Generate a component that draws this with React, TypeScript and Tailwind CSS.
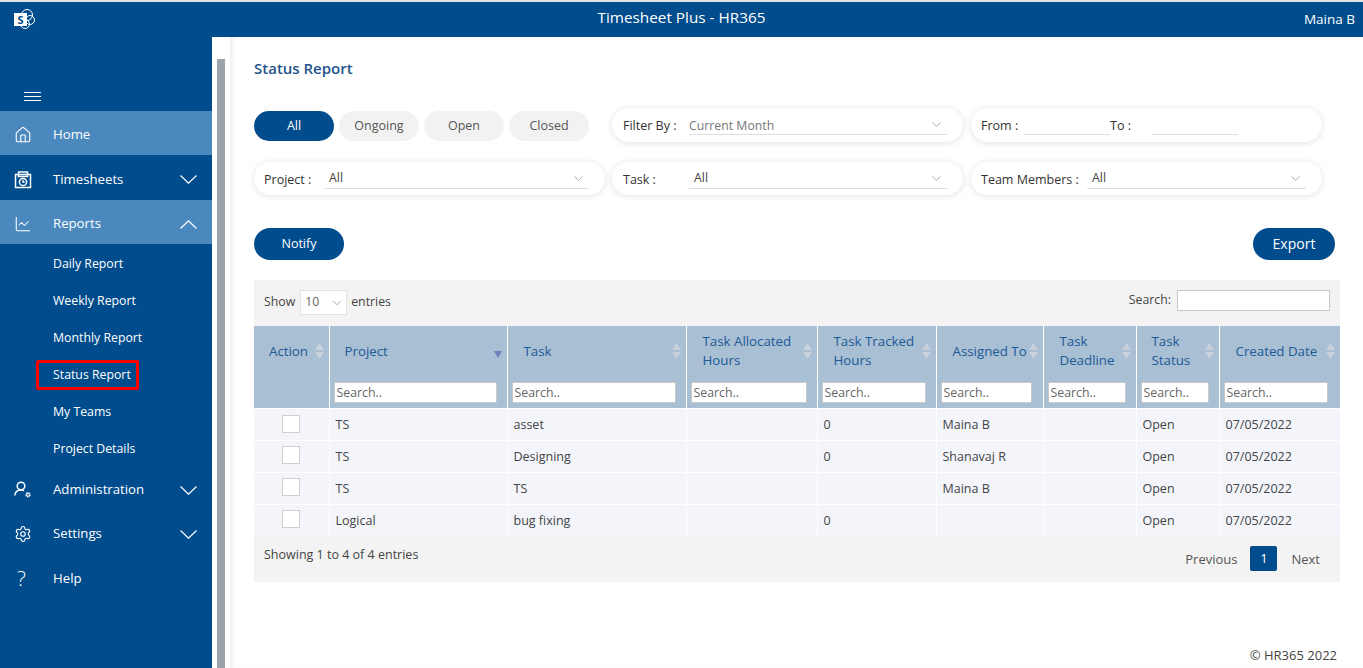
import React from 'react';
import { ChevronDown, Home, LineChart, Settings } from 'lucide-react';

const subItems = ['Daily Report', 'Weekly Report', 'Monthly Report', 'Status Report', 'My Teams', 'Project Details'];

const columns = [
  { title: ['Action'], width: 'w-[75px]', pad: 'pl-[15px]', search: false, input: '' },
  { title: ['Project'], width: 'w-[178px]', pad: 'pl-[15px]', search: true, input: 'w-[163px]', sorted: true },
  { title: ['Task'], width: 'w-[179px]', pad: 'pl-[16px]', search: true, input: 'w-[164px]' },
  { title: ['Task Allocated', 'Hours'], width: 'w-[131px]', pad: 'pl-[16px]', search: true, input: 'w-[116px]' },
  { title: ['Task Tracked', 'Hours'], width: 'w-[119px]', pad: 'pl-[16px]', search: true, input: 'w-[104px]' },
  { title: ['Assigned To'], width: 'w-[107px]', pad: 'pl-[16px]', search: true, input: 'w-[91px]' },
  { title: ['Task', 'Deadline'], width: 'w-[93px]', pad: 'pl-[16px]', search: true, input: 'w-[78px]' },
  { title: ['Task', 'Status'], width: 'w-[83px]', pad: 'pl-[15px]', search: true, input: 'w-[68px]' },
  { title: ['Created Date'], width: 'w-[121px]', pad: 'pl-[16px]', search: true, input: 'w-[104px]' },
];

const rows = [
  ['TS', 'asset', '', '0', 'Maina B', '', 'Open', '07/05/2022'],
  ['TS', 'Designing', '', '0', 'Shanavaj R', '', 'Open', '07/05/2022'],
  ['TS', 'TS', '', '', 'Maina B', '', 'Open', '07/05/2022'],
  ['Logical', 'bug fixing', '', '0', '', '', 'Open', '07/05/2022'],
];

const TimesheetIcon = () => (
  <svg width="18" height="18" viewBox="0 0 18 18" fill="none" stroke="currentColor" strokeWidth="1.5">
    <path d="M1.5 3.5h15v13h-15z" />
    <path d="M4.5 3.5V1h9v2.5M4.5 3.5v2h9v-2" />
    <circle cx="9" cy="11" r="3.6" />
    <path d="M9 9.2V11h1.6" />
  </svg>
);

const AdminIcon = () => (
  <svg width="18" height="18" viewBox="0 0 18 18" fill="none" stroke="currentColor" strokeWidth="1.5">
    <circle cx="7" cy="5" r="3.8" />
    <path d="M0.8 14.5c.3-3.6 2.6-5.6 6.2-5.6 1.2 0 2.2.2 3 .7" />
    <circle cx="14" cy="13.8" r="1.7" strokeWidth="1.9" strokeDasharray="1.4 .5" />
  </svg>
);

const NavChevron = ({ up }: { up?: boolean }) => (
  <svg width="17" height="9" viewBox="0 0 17 9" fill="none" stroke="currentColor" strokeWidth="1.2">
    <path d={up ? 'M0.5 8.5L8.5 0.8l8 7.7' : 'M0.5 0.5l8 7.7 8-7.7'} />
  </svg>
);

const SortArrows = ({ sorted }: { sorted?: boolean }) =>
  sorted ? (
    <svg width="8" height="7" viewBox="0 0 8 7" className="absolute right-[5px] top-[25px]">
      <path d="M0 0h8L4 7z" fill="#6f7fc4" />
    </svg>
  ) : (
    <svg width="9" height="16" viewBox="0 0 9 16" className="absolute right-[5px] top-[17px]">
      <path d="M4.5 0L9 7H0zM0 9h9l-4.5 7z" fill="#c9d2da" />
    </svg>
  );

const NavItem = ({
  icon,
  label,
  active,
  chevron,
  h,
}: {
  icon: React.ReactNode;
  label: string;
  active?: boolean;
  chevron?: 'up' | 'down';
  h: string;
}) => (
  <div className={`${h} flex items-center pr-[15px] text-[13.2px] text-white ${active ? 'bg-[#4a88be]' : ''}`}>
    <span className="w-[53px] pl-[14px] flex items-center">{icon}</span>
    <span className="flex-1">{label}</span>
    {chevron === 'down' && <NavChevron />}
    {chevron === 'up' && <NavChevron up />}
  </div>
);

const FilterSelect = ({
  label,
  value,
  labelW,
  muted,
  inset,
  h = 'h-[33px]',
}: {
  label: string;
  value: string;
  labelW: string;
  muted?: boolean;
  inset?: string;
  h?: string;
}) => (
  <div className={`${h} w-[351px] rounded-full bg-white shadow-[0_1px_7px_rgba(0,0,0,0.12)] flex items-center pl-[10px] pr-[16px]`}>
    <span className={`${labelW} mt-[3px] shrink-0 text-[12.5px] font-medium text-[#333]`}>{label}</span>
    <div className={`flex-1 h-[20px] border-b border-[#dedede] flex items-center justify-between pr-[2px] ${muted ? 'mb-[1px]' : ''}`}>
      <span className={`${inset ?? ''} text-[12.3px] ${muted ? 'pt-[4px] text-[#777]' : 'text-[#444]'}`}>{value}</span>
      <ChevronDown size={15} strokeWidth={1} className="text-[#777] mr-[1px]" />
    </div>
  </div>
);

const Pill = ({ label, active }: { label: string; active?: boolean }) => (
  <button className={`h-[30px] w-[80px] rounded-full text-[12.5px] ${active ? 'bg-[#004c8c] text-white' : 'bg-[#f2f2f2] text-[#555]'}`}>
    {label}
  </button>
);

export default function App() {
  return (
    <div className="w-[1363px] h-[668px] overflow-hidden flex flex-col bg-white font-['Open_Sans',sans-serif]">
      {/* top bar */}
      <div className="h-[2px] bg-[#dfe3e6]" />
      <header className="h-[35px] bg-[#004c8c] grid grid-cols-[1fr_auto_1fr] items-center text-white">
        <div className="pl-[14px]">
          <div className="relative w-[21px] h-[21px]">
            <span className="absolute left-[7px] top-0 w-[12px] h-[12px] rounded-full border-[1.5px] border-white" />
            <span className="absolute left-[11px] top-[6px] w-[10px] h-[10px] rounded-full border-[1.5px] border-white" />
            <span className="absolute left-[6px] top-[10px] w-[10px] h-[10px] rounded-full border-[1.5px] border-white" />
            <span className="absolute left-0 top-[4px] w-[13px] h-[13px] bg-white text-[#004c8c] text-[11px] leading-[13px] font-bold text-center">S</span>
          </div>
        </div>
        <div className="text-[15.3px] mb-[5px]">Timesheet Plus - HR365</div>
        <div className="text-right pr-[8px] text-[13.5px]">Maina B</div>
      </header>

      <div className="flex-1 flex min-h-0">
        {/* sidebar */}
        <aside className="w-[212px] shrink-0 bg-[#004c8c] text-white">
          <div className="h-[74px] flex items-end pb-[10px] pl-[24px]">
            <div className="w-[17px] flex flex-col gap-[3px]">
              <span className="h-px bg-white" />
              <span className="h-px bg-white" />
              <span className="h-px bg-white" />
            </div>
          </div>
          <NavItem h="h-[44px] pt-[4px]" active label="Home" icon={<Home size={18} strokeWidth={1.5} />} />
          <NavItem h="h-[45px] pt-[4px]" label="Timesheets" chevron="down" icon={<TimesheetIcon />} />
          <NavItem h="h-[44px] pt-[4px]" active label="Reports" chevron="up" icon={<LineChart size={18} strokeWidth={1.4} />} />
          <div className="flex flex-col">
            {subItems.map((s) => (
              <div key={s} className="h-[37px] pl-[53px] pt-[4px] flex items-center text-[12.3px] text-white relative">
                {s}
                {s === 'Status Report' && (
                  <span className="absolute left-[36px] top-[5px] w-[103px] h-[30px] border-[3px] border-[#ff0000] rounded-[2px]" />
                )}
              </div>
            ))}
          </div>
          <NavItem h="h-[44px] pt-[4px]" label="Administration" chevron="down" icon={<AdminIcon />} />
          <NavItem h="h-[44px] pt-[4px]" label="Settings" chevron="down" icon={<Settings size={18} strokeWidth={1.5} />} />
          <NavItem h="h-[45px] pt-[4px]" label="Help" icon={<span className="pl-[3px] text-[21px] font-light leading-none">?</span>} />
        </aside>

        {/* scrollbar */}
        <div className="w-[18px] shrink-0 pt-[22px] px-[5px] bg-white">
          <div className="h-full bg-[#9aa4ad]" />
        </div>

        {/* main */}
        <main className="flex-1 min-w-0 pl-[24px] pr-[23px] flex flex-col shadow-[inset_4px_0_4px_-2px_rgba(0,0,0,0.08)]">
          <h1 className="mt-[20px] h-[22px] text-[15px] font-semibold leading-[22px] text-[#23548c]">Status Report</h1>

          <div className="mt-[29px] flex items-start h-[34px]">
            <div className="flex gap-[5px] w-[358px] pt-[3px]">
              <Pill label="All" active />
              <Pill label="Ongoing" />
              <Pill label="Open" />
              <Pill label="Closed" />
            </div>
            <div className="flex gap-[8px]">
              <FilterSelect h="h-[34px]" label="Filter By :" value="Current Month" labelW="w-[66px] ml-[1px]" muted />
              <div className="h-[34px] w-[351px] rounded-full bg-white shadow-[0_1px_7px_rgba(0,0,0,0.12)] flex items-center pl-[10px] text-[12.5px] font-medium text-[#333]">
                <span className="w-[43px] mt-[2px]">From :</span>
                <span className="w-[86px] h-[20px] mb-[1px] border-b border-[#dedede]" />
                <span className="w-[42px] mt-[2px]">To :</span>
                <span className="w-[86px] h-[20px] mb-[1px] border-b border-[#dedede]" />
              </div>
            </div>
          </div>

          <div className="mt-[20px] flex gap-[7px]">
            <FilterSelect label="Project :" value="All" labelW="w-[60px]" inset="ml-[5px]" />
            <FilterSelect label="Task :" value="All" labelW="w-[66px] ml-[1px]" inset="ml-[5px]" />
            <div className="ml-[1px]">
              <FilterSelect label="Team Members :" value="All" labelW="w-[106px]" inset="ml-[5px]" />
            </div>
          </div>

          <div className="mt-[33px] flex justify-between pr-[5px]">
            <button className="h-[32px] w-[90px] pt-[1px] rounded-full bg-[#004c8c] text-white text-[12.5px]">Notify</button>
            <button className="h-[32px] w-[82px] pb-[2px] rounded-full bg-[#004c8c] text-white text-[14px]">Export</button>
          </div>

          {/* table block */}
          <section className="mt-[20px] bg-[#f3f3f3] h-[302px]">
            <div className="h-[46px] flex items-start justify-between pl-[10px] pr-[10px] pt-[10px] text-[12.3px] text-[#444]">
              <div className="flex items-center h-[25px]">
                <span>Show</span>
                <div className="ml-[5px] w-[47px] h-[25px] bg-white border border-[#e3e3e3] flex items-center justify-between pl-[4px] pr-[2px] text-[#666]">
                  10
                  <ChevronDown size={14} strokeWidth={1} />
                </div>
                <span className="ml-[4px]">entries</span>
              </div>
              <div className="flex items-center h-[21px]">
                <span className="mr-[6px]">Search:</span>
                <input className="w-[153px] h-[21px] bg-white border border-[#c8c8c8]" />
              </div>
            </div>

            <table className="table-fixed w-[1086px] border-collapse text-[12.5px] text-[#444]">
              <colgroup>
                {columns.map((c, i) => (
                  <col key={i} className={c.width} />
                ))}
              </colgroup>
              <thead>
                <tr className="h-[82px] bg-[#a9bfd3]">
                  {columns.map((c, i) => (
                    <th key={i} className="p-0 relative align-top border-l border-white first:border-l-0 font-normal text-left">
                      <div className={`h-[50px] flex flex-col justify-center ${c.pad} text-[13.3px] leading-[19px] text-[#1c5a96]`}>
                        {c.title.map((t) => (
                          <span key={t}>{t}</span>
                        ))}
                      </div>
                      <SortArrows sorted={c.sorted} />
                      {c.search && (
                        <div className="pl-[4px] pt-[6px]">
                          <input
                            placeholder="Search.."
                            className={`${c.input} h-[21px] bg-white border border-[#c8c8c8] pl-[2px] text-[12.3px] placeholder:text-[#666]`}
                          />
                        </div>
                      )}
                    </th>
                  ))}
                </tr>
              </thead>
              <tbody>
                {rows.map((r, i) => (
                  <tr key={i} className="h-[32px] bg-[#f3f5fb] border-t border-white">
                    <td className="p-0 align-top">
                      <div className={`ml-[28px] w-[18px] h-[18px] bg-white border border-[#cfcfcf] ${i === 0 ? 'mt-[6px]' : 'mt-[5px]'}`} />
                    </td>
                    {r.map((v, j) => (
                      <td key={j} className="p-0 pl-[6px] pt-[2px] border-l border-white">
                        {v}
                      </td>
                    ))}
                  </tr>
                ))}
              </tbody>
            </table>

            <div className="flex justify-between pl-[10px] pr-[20px] pt-[10px] text-[12.5px] text-[#444]">
              <span>Showing 1 to 4 of 4 entries</span>
              <div className="flex items-center h-[25px] text-[13px] text-[#555]">
                <span className="pt-[2px]">Previous</span>
                <span className="ml-[13px] w-[27px] h-[25px] rounded-[2px] bg-[#004c8c] text-white flex items-center justify-center">1</span>
                <span className="ml-[14px] pt-[2px]">Next</span>
              </div>
            </div>
          </section>

          <footer className="mt-auto pb-[3px] pr-[3px] text-right text-[13px] text-[#444]">© HR365 2022</footer>
        </main>
      </div>
    </div>
  );
}
